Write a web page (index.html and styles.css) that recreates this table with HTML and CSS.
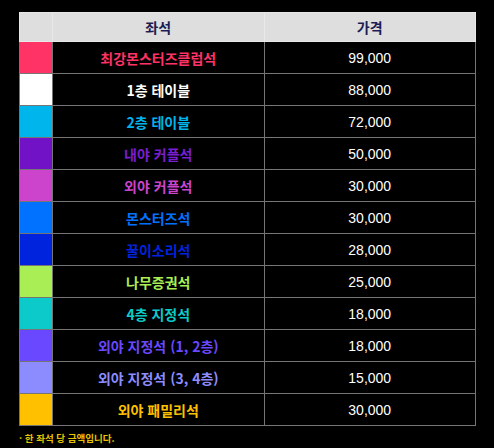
FILE: index.html
```html
<!DOCTYPE html>
<html lang="ko">
<head>
<meta charset="utf-8">
<link rel="stylesheet" href="styles.css">
</head>
<body>
<div class="wrap">
  <table class="seats">
    <thead>
      <tr><th class="sw"></th><th>좌석</th><th>가격</th></tr>
    </thead>
    <tbody>
      <tr class="c1"><td class="sw"></td><td class="name">최강몬스터즈클럽석</td><td class="price">99,000</td></tr>
      <tr class="c2"><td class="sw"></td><td class="name">1층 테이블</td><td class="price">88,000</td></tr>
      <tr class="c3"><td class="sw"></td><td class="name">2층 테이블</td><td class="price">72,000</td></tr>
      <tr class="c4"><td class="sw"></td><td class="name">내야 커플석</td><td class="price">50,000</td></tr>
      <tr class="c5"><td class="sw"></td><td class="name">외야 커플석</td><td class="price">30,000</td></tr>
      <tr class="c6"><td class="sw"></td><td class="name">몬스터즈석</td><td class="price">30,000</td></tr>
      <tr class="c7"><td class="sw"></td><td class="name">꿀이소리석</td><td class="price">28,000</td></tr>
      <tr class="c8"><td class="sw"></td><td class="name">나무증권석</td><td class="price">25,000</td></tr>
      <tr class="c9"><td class="sw"></td><td class="name">4층 지정석</td><td class="price">18,000</td></tr>
      <tr class="c10"><td class="sw"></td><td class="name">외야 지정석 (1, 2층)</td><td class="price">18,000</td></tr>
      <tr class="c11"><td class="sw"></td><td class="name">외야 지정석 (3, 4층)</td><td class="price">15,000</td></tr>
      <tr class="c12"><td class="sw"></td><td class="name">외야 패밀리석</td><td class="price">30,000</td></tr>
    </tbody>
  </table>
  <p class="note">· 한 좌석 당 금액입니다.</p>
</div>
</body>
</html>
```
FILE: styles.css
```css
html, body {
  margin: 0;
  padding: 0;
  background: #000;
}
.wrap {
  padding: 12px 0 0 19px;
}
.seats {
  border-collapse: collapse;
  width: 457px;
  table-layout: fixed;
  font-family: "Noto Sans CJK KR", "Liberation Sans", sans-serif;
}
.seats th, .seats td {
  border: 1px solid #757575;
  padding: 0;
  text-align: center;
}
.seats th {
  background: #dedede;
  border-color: #e8e8e8;
  height: 28px;
  color: #1c1c55;
  font-size: 14px;
  font-weight: 700;
}
.seats th.sw, .seats td.sw {
  width: 32px;
}
.seats td {
  height: 31px;
}
.name {
  font-size: 14px;
  font-weight: 700;
}
.price {
  font-family: "Liberation Sans", Arial, sans-serif;
  font-size: 14px;
  color: #fff;
}
.c1 .sw { background: #ff3366; } .c1 .name { color: #ff3366; }
.c2 .sw { background: #ffffff; } .c2 .name { color: #ffffff; }
.c3 .sw { background: #00b4ec; } .c3 .name { color: #00b4ec; }
.c4 .sw { background: #7212c6; } .c4 .name { color: #7a1ed0; }
.c5 .sw { background: #cc44cc; } .c5 .name { color: #cc44cc; }
.c6 .sw { background: #0072ff; } .c6 .name { color: #0072ff; }
.c7 .sw { background: #0024dd; } .c7 .name { color: #0024dd; }
.c8 .sw { background: #aaee55; } .c8 .name { color: #aaee55; }
.c9 .sw { background: #0ccaca; } .c9 .name { color: #0ccaca; }
.c10 .sw { background: #6a48ff; } .c10 .name { color: #6a48ff; }
.c11 .sw { background: #8c8cff; } .c11 .name { color: #8c8cff; }
.c12 .sw { background: #ffc000; } .c12 .name { color: #ffc000; }
.note {
  margin: 5px 0 0 0;
  font-family: "Noto Sans CJK KR", sans-serif;
  font-size: 9.5px;
  font-weight: 700;
  color: #e8c400;
}
```
